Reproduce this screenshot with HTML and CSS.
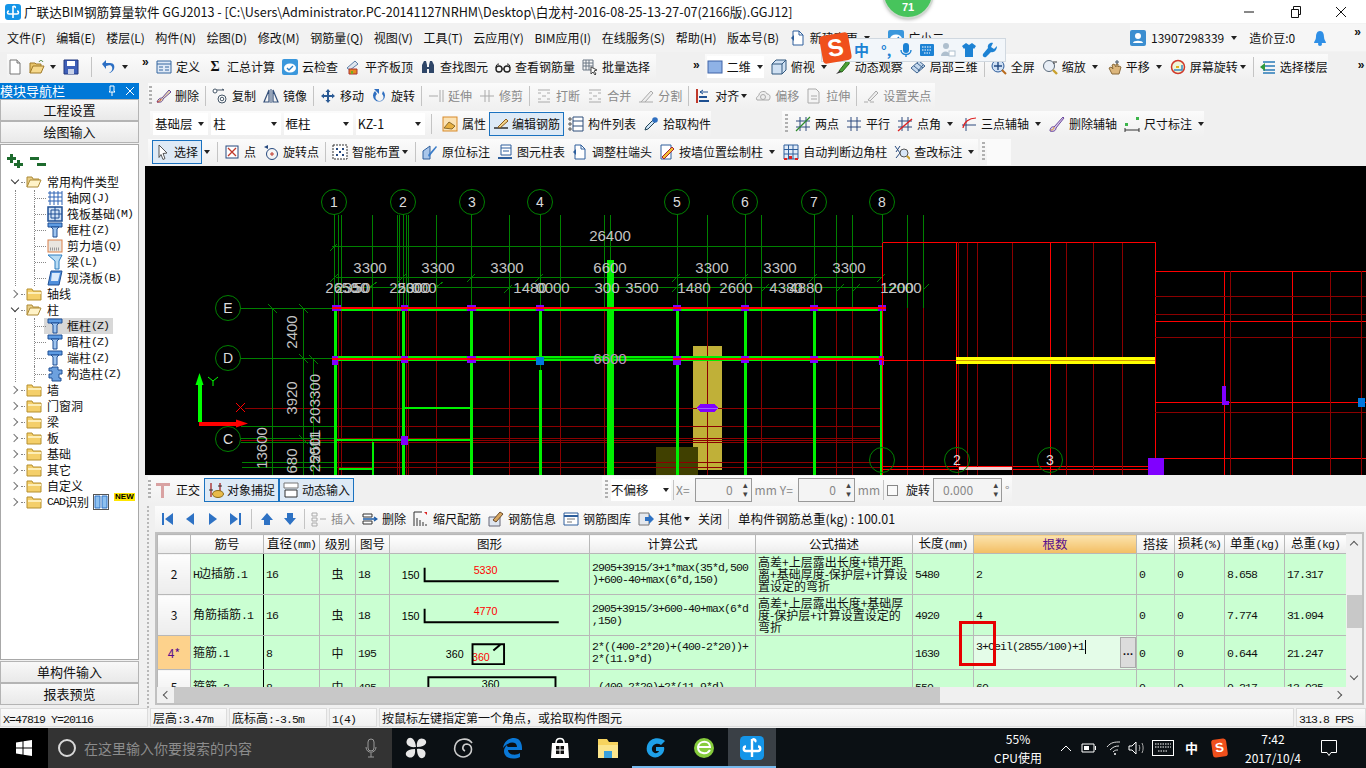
FILE: index.html
```html
<!DOCTYPE html>
<html lang="zh-CN">
<head>
<meta charset="utf-8">
<title>广联达BIM钢筋算量软件 GGJ2013</title>
<link rel="stylesheet" href="styles.css">
</head>
<body>
<svg class="sprite" width="0" height="0">
  <defs>
    <symbol id="app" viewBox="0 0 16 16"><rect width="16" height="16" rx="3" fill="#1495e8"/><path d="M8 2v12M4 7c-2 0-2 3 0 3h8c2 0 2-3 0-3M8 3c1-1.500 3-.5 2 1" fill="none" stroke="#fff" stroke-width="1.600"/></symbol>
    <symbol id="doc" viewBox="0 0 16 16"><path d="M3 1h7l3 3v11H3z" fill="#fff" stroke="#777"/><path d="M10 1v3h3" fill="#ddd" stroke="#777"/></symbol>
    <symbol id="open" viewBox="0 0 16 16"><path d="M1 14V4h5l1 1h5v2" fill="#e8c46a" stroke="#a07a28"/><path d="M1 14l3-7h11l-3 7z" fill="#f6d98c" stroke="#a07a28"/><path d="M10 3c1-2 3-2 4 0" fill="none" stroke="#3a7a30"/></symbol>
    <symbol id="save" viewBox="0 0 16 16"><path d="M1 1h14v14H1z" fill="#3f5fb8" stroke="#23397f"/><path d="M4 2h8v5H4z" fill="#fff"/><path d="M5 10h6v5H5z" fill="#c9d2e8"/></symbol>
    <symbol id="undo" viewBox="0 0 16 16"><path d="M5 4h4c4 0 5 3 4 6-1 2-3 4-5 4 2-1 4-3 3-6-1-2-2-2-6-1v3L1 5l4-4z" fill="#2c6fc4"/></symbol>
    <symbol id="deficon" viewBox="0 0 16 16"><path d="M1 2h14v12H1z" fill="#dfe9f6" stroke="#35679f"/><path d="M1 5h14M3 8h4M3 11h4M9 8h4M9 11h4" stroke="#35679f" fill="none"/></symbol>
    <symbol id="cloud" viewBox="0 0 16 16"><rect x="0" y="0" width="16" height="16" rx="2" fill="#3a97dc"/><ellipse cx="8" cy="9" rx="6" ry="4.500" fill="#fff"/><path d="M5 9l2 2 4-4" fill="none" stroke="#2a80c8" stroke-width="1.400"/></symbol>
    <symbol id="flat" viewBox="0 0 16 16"><path d="M2 9l8-7 3 3-8 6z" fill="#dfe6ee" stroke="#5d7ea6"/><path d="M4 10h8v5H4z" fill="#e58a1f" stroke="#a33"/><path d="M6 12h2v3H6z" fill="#7a2"/></symbol>
    <symbol id="bino" viewBox="0 0 16 16"><path d="M2 14V6l2-4h2l1 4v2h2V6l1-4h2l2 4v8H9v-4H7v4z" fill="#2f4668"/></symbol>
    <symbol id="glass" viewBox="0 0 16 16"><circle cx="4" cy="10" r="3" fill="none" stroke="#222" stroke-width="1.400"/><circle cx="12" cy="10" r="3" fill="none" stroke="#222" stroke-width="1.400"/><path d="M1 9c0-3 1-4 3-4M7 10h2M15 9c0-3-1-4-3-4" fill="none" stroke="#222"/></symbol>
    <symbol id="batch" viewBox="0 0 16 16"><path d="M1 1h10v10H1zM1 4h10M1 7h10M4 1v10M7 1v10" fill="none" stroke="#6a7684"/><path d="M9 8l6 3-3 1 2 3-1 1-2-3-2 2z" fill="#fff" stroke="#444"/></symbol>
    <symbol id="sq" viewBox="0 0 16 16"><rect x="1" y="2" width="14" height="12" fill="#8fb2e6" stroke="#3f63a6"/></symbol>
    <symbol id="cube" viewBox="0 0 16 16"><path d="M1 5l4-4h10v10l-4 4H1z" fill="#cfe0f2" stroke="#33597f"/><path d="M1 5h10v10M11 5l4-4" fill="none" stroke="#33597f"/></symbol>
    <symbol id="orbit" viewBox="0 0 16 16"><path d="M4 12L11 3c2-2 4 0 3 2L7 13z" fill="#4aa036" stroke="#2a6a1a"/><path d="M1 15l3-3 3 1z" fill="#333"/></symbol>
    <symbol id="part3" viewBox="0 0 16 16"><path d="M1 9l8-7 6 5-8 7z" fill="#c6d9ee" stroke="#3c628e"/><path d="M4 7l6 5M7 4l6 5M8 12l5-6" stroke="#3c628e" fill="none"/></symbol>
    <symbol id="full" viewBox="0 0 16 16"><circle cx="7" cy="7" r="6" fill="#cfe0f4" stroke="#2f5e9c"/><path d="M7 3v8M3 7h8" stroke="#234a82" stroke-width="1.400"/><path d="M11 11l4 4" stroke="#b86a1c" stroke-width="2"/></symbol>
    <symbol id="zoomi" viewBox="0 0 16 16"><circle cx="7" cy="7" r="5.500" fill="#e8eef6" stroke="#5a6a7a"/><path d="M11 11l4 4" stroke="#c9a02c" stroke-width="2.400"/><path d="M12 2v3M14 2v2" stroke="#333"/></symbol>
    <symbol id="hand" viewBox="0 0 16 16"><path d="M3 9l3 6h7l2-7-2-1-1 1V5h-2V8L8 5 6 6l1 4-2-2z" fill="#dcb67c" stroke="#8a6a3a"/><path d="M11 1v4M9 3h4" stroke="#456" /></symbol>
    <symbol id="rota" viewBox="0 0 16 16"><circle cx="8" cy="8" r="6.500" fill="#eef6d8" stroke="#d0392b" stroke-width="1.500"/><path d="M4 11h8V6" fill="none" stroke="#3b8cc4" stroke-width="1.500"/><path d="M6 8h3" stroke="#e2b020" stroke-width="2"/></symbol>
    <symbol id="floor" viewBox="0 0 16 16"><path d="M3 3h12M3 7h12M3 11h12M3 14h12" stroke="#2a7bb8" stroke-width="1.600"/><path d="M0 8l5-4v8z" fill="#2f9a3a"/></symbol>
    <symbol id="del" viewBox="0 0 16 16"><path d="M2 14c1-3 3-4 5-4L14 2l2 2-8 7c0 2-2 4-6 3z" fill="#e8d9ae" stroke="#6a4a9a"/><path d="M2 14c2 0 3-1 4-3" stroke="#c0392b" fill="none"/></symbol>
    <symbol id="copy" viewBox="0 0 16 16"><circle cx="3" cy="3" r="2" fill="#fff" stroke="#456"/><circle cx="10" cy="11" r="4" fill="#fff" stroke="#456"/><circle cx="10" cy="11" r="1.800" fill="none" stroke="#456"/><path d="M5 2h7l-2 -1" stroke="#456" fill="none"/></symbol>
    <symbol id="mirror" viewBox="0 0 16 16"><path d="M6 2L1 14h5zM10 2l5 12h-5z" fill="none" stroke="#34507a" stroke-width="1.200"/><path d="M8 1v14" stroke="#34507a"/></symbol>
    <symbol id="move" viewBox="0 0 16 16"><path d="M8 1l2.500 3H9v3h3V5.500L15 8l-3 2.500V9H9v3h1.500L8 15l-2.500-3H7V9H4v1.500L1 8l3-2.500V7h3V4H5.500z" fill="#2a5a94"/></symbol>
    <symbol id="rotate" viewBox="0 0 16 16"><path d="M4 3a6 6 0 1 0 8 0l-1 3a4 4 0 1 1-5 0z" fill="#2f6fc0"/><path d="M3 1h5v5z" fill="#2f6fc0"/></symbol>
    <symbol id="ext" viewBox="0 0 16 16"><path d="M1 8h9M12 2v12M15 2v12" stroke="#aaa" fill="none"/></symbol>
    <symbol id="trim" viewBox="0 0 16 16"><path d="M1 8h14M6 2v12M10 2v12" stroke="#aaa" fill="none"/></symbol>
    <symbol id="brk" viewBox="0 0 16 16"><path d="M2 2h12M2 5h3M11 5h3M2 14h12M2 11h3M11 11h3M6 8h4" stroke="#aaa" fill="none"/></symbol>
    <symbol id="split" viewBox="0 0 16 16"><path d="M1 14h14M3 14L13 3l2 2-8 9" stroke="#aaa" fill="#eee"/></symbol>
    <symbol id="align" viewBox="0 0 16 16"><path d="M2 1v14" stroke="#c0392b" stroke-width="2"/><path d="M4 13h10M4 9h8" stroke="#1d4f91" stroke-width="2"/><path d="M5 4h8M5 4l3-2M5 4l3 2" stroke="#1d4f91" fill="none"/></symbol>
    <symbol id="off" viewBox="0 0 16 16"><path d="M2 12c-2-3 2-4 2-5 0-4 7-5 8-1 3 0 4 3 2 6z" fill="#eee" stroke="#aaa"/><circle cx="8" cy="9" r="2.500" fill="none" stroke="#aaa"/></symbol>
    <symbol id="stretch" viewBox="0 0 16 16"><path d="M2 1h8l3 3v11H2z" fill="#f4f4f4" stroke="#aaa"/><path d="M5 8h6M5 11h6" stroke="#aaa"/></symbol>
    <symbol id="grip" viewBox="0 0 16 16"><path d="M1 14h4M7 14h4M5 12l8-9 2 2-8 8z" stroke="#aaa" fill="#eee"/></symbol>
    <symbol id="attr" viewBox="0 0 16 16"><rect x="1" y="1" width="14" height="14" fill="#fbe2b4" stroke="#d78a2a"/><path d="M2 12l5-6 6 4-3 3z" fill="#e8b040" stroke="#8a6a2a"/></symbol>
    <symbol id="edit" viewBox="0 0 16 16"><path d="M1 12h14" stroke="#222" stroke-width="1.400"/><path d="M5 11l8-8 2 2-8 7z" fill="#f3d489" stroke="#8a5a1a"/></symbol>
    <symbol id="list" viewBox="0 0 16 16"><path d="M1 2h2v2H1zM1 7h2v2H1zM1 12h2v2H1z" fill="none" stroke="#555"/><path d="M5 1h10v14H5zM5 5h10M5 10h10" fill="#fff" stroke="#2e4f7a"/></symbol>
    <symbol id="pick" viewBox="0 0 16 16"><path d="M2 14l1-3 7-7 2 2-7 7z" fill="#cfe4f8" stroke="#245"/><circle cx="12" cy="4" r="2.800" fill="#2f6fc0"/></symbol>
    <symbol id="twop" viewBox="0 0 16 16"><path d="M5 1v14M11 1v14M1 5h14M1 11h14" stroke="#2e4a7e" fill="none"/><path d="M1 15L15 1" stroke="#2c8a2c" stroke-width="1.200"/></symbol>
    <symbol id="para" viewBox="0 0 16 16"><path d="M5 1v14M11 1v14M1 5h14M1 11h14" stroke="#2e4a7e" fill="none"/></symbol>
    <symbol id="angle" viewBox="0 0 16 16"><path d="M5 1v14M11 1v14M1 5h14M1 11h14" stroke="#2e4a7e" fill="none"/><path d="M1 15L15 3" stroke="#d22" stroke-width="1.400"/></symbol>
    <symbol id="arc" viewBox="0 0 16 16"><path d="M5 2v13M1 9h14" stroke="#2e4a7e" fill="none"/><path d="M2 12C3 6 8 2 15 2" stroke="#d22" fill="none" stroke-width="1.200"/></symbol>
    <symbol id="brush" viewBox="0 0 16 16"><path d="M1 15c0-3 2-5 4-4L14 1l1 1-8 10c0 3-3 4-6 3z" fill="#d9c7ea" stroke="#6b4a9c"/><path d="M2 14c2 0 3-1 3-3" stroke="#e0a020" fill="none"/></symbol>
    <symbol id="dim" viewBox="0 0 16 16"><path d="M1 14h14M1 12v4M15 12v4" stroke="#333" fill="none"/><path d="M1 7h3v3H1zM12 1h3v3h-3z" fill="#3bb54a"/></symbol>
    <symbol id="arrow" viewBox="0 0 16 16"><path d="M4 1l8 8-4 .5 2 5-2 1-2-5-2 3z" fill="#fff" stroke="#555"/></symbol>
    <symbol id="point" viewBox="0 0 16 16"><rect x="2" y="2" width="12" height="12" fill="#fff" stroke="#26497f"/><path d="M4 4l8 8M12 4l-8 8" stroke="#c0392b" stroke-width="1.300"/></symbol>
    <symbol id="rotp" viewBox="0 0 16 16"><circle cx="9" cy="10" r="5.500" fill="none" stroke="#26497f"/><path d="M7 10h4M9 8v4" stroke="#c0392b"/><path d="M1 3l4-2v4z" fill="#26497f"/></symbol>
    <symbol id="smart" viewBox="0 0 16 16"><rect x="1" y="1" width="14" height="14" fill="#fff" stroke="#333" stroke-dasharray="2 1"/><path d="M4 4h2v2H4zM10 4h2v2h-2zM4 10h2v2H4zM10 10h2v2h-2zM7 7h2v2H7z" fill="#26497f"/></symbol>
    <symbol id="orig" viewBox="0 0 16 16"><path d="M1 15V7l7-5v13z" fill="#a9c6ea" stroke="#2e5f9c"/><path d="M6 11l8-9 1 1-8 10z" fill="#3a7cc8"/></symbol>
    <symbol id="coltab" viewBox="0 0 16 16"><path d="M4 1h10v10H4z" fill="#fff" stroke="#2e5f9c"/><path d="M4 4h10M6 7h6" stroke="#2e5f9c"/><path d="M1 13h14v2H1z" fill="#2e5f9c"/></symbol>
    <symbol id="coladj" viewBox="0 0 16 16"><path d="M3 1h6l4 4v10H3z" fill="#fff" stroke="#2e5f9c"/><path d="M9 1v4h4" fill="none" stroke="#2e5f9c"/><path d="M1 8l3-3v6z" fill="#2e5f9c"/></symbol>
    <symbol id="wall" viewBox="0 0 16 16"><path d="M2 1h10v14H2z" fill="#fff" stroke="#2e5f9c"/><path d="M3 13L13 3l2 2L5 15z" fill="#f1c232" stroke="#a23"/></symbol>
    <symbol id="auto" viewBox="0 0 16 16"><path d="M1 1h14v14H1zM1 5.500h14M1 10h14M5.500 1v14M10 1v14" fill="#e2ecf8" stroke="#2e5f9c"/><path d="M1 14h3v2H1zM12 14h3v2h-3zM6 12h3v3H6z" fill="#d22"/></symbol>
    <symbol id="chk" viewBox="0 0 16 16"><path d="M1 2l5 7-4 5M6 2L2 8" stroke="#26497f" fill="none"/><circle cx="10" cy="9" r="4" fill="#d8e6f6" stroke="#555"/><path d="M13 12l3 3" stroke="#c9a02c" stroke-width="2"/></symbol>
    <symbol id="ortho" viewBox="0 0 16 16"><path d="M1 1h14v3H9v12H6V4H1z" fill="#d9a2a2"/></symbol>
    <symbol id="snap" viewBox="0 0 16 16"><path d="M3 1v14M12 1v8" stroke="#a33" stroke-width="1.400"/><path d="M1 8h4M10 4h4" stroke="#333"/><ellipse cx="10" cy="12" rx="5.500" ry="3.500" fill="#e8bb4a" stroke="#8a6a1a"/></symbol>
    <symbol id="dyn" viewBox="0 0 16 16"><path d="M1 1h14v5H1z" fill="#fff" stroke="#777"/><path d="M2 8h12v7H2z" fill="#fff" stroke="#333"/></symbol>
    <symbol id="first" viewBox="0 0 16 16"><path d="M3 2h2v12H3zM14 2v12L6 8z" fill="#2e72c4"/></symbol>
    <symbol id="prev" viewBox="0 0 16 16"><path d="M12 2v12L4 8z" fill="#2e72c4"/></symbol>
    <symbol id="next" viewBox="0 0 16 16"><path d="M4 2v12l8-6z" fill="#2e72c4"/></symbol>
    <symbol id="last" viewBox="0 0 16 16"><path d="M11 2h2v12h-2zM2 2v12l8-6z" fill="#2e72c4"/></symbol>
    <symbol id="up" viewBox="0 0 16 16"><path d="M8 2l6 7h-3v5H5V9H2z" fill="#2e72c4"/></symbol>
    <symbol id="down" viewBox="0 0 16 16"><path d="M8 14l6-7h-3V2H5v5H2z" fill="#2e72c4"/></symbol>
    <symbol id="ins" viewBox="0 0 16 16"><path d="M1 2h5v3H1zM1 7h5v3H1zM1 12h5v3H1zM9 8h6" fill="none" stroke="#aaa"/></symbol>
    <symbol id="rdel" viewBox="0 0 16 16"><path d="M1 3h9v3H1zM1 10h9v3H1z" fill="#fff" stroke="#333"/><path d="M1 8h13M12 6l3 2-3 2" fill="none" stroke="#1d5ca8" stroke-width="1.300"/></symbol>
    <symbol id="scale" viewBox="0 0 16 16"><path d="M1 1h8M1 1v14M4 7v8M7 9v6M10 11v4M13 13v2" stroke="#333"/><path d="M11 1h3v3z" fill="#d22"/></symbol>
    <symbol id="info" viewBox="0 0 16 16"><path d="M1 6h11v9H1z" fill="#dfe6f0" stroke="#667"/><path d="M5 9l7-8 3 2-7 8z" fill="#d9a860" stroke="#6a4a2a"/></symbol>
    <symbol id="lib" viewBox="0 0 16 16"><path d="M1 2h14v12H1z" fill="#fff" stroke="#2e5f9c"/><path d="M1 5h14" stroke="#2e5f9c" stroke-width="2"/><path d="M4 8h8M4 11h5" stroke="#777"/></symbol>
    <symbol id="other" viewBox="0 0 16 16"><path d="M1 2h10v12H1z" fill="#e4e8ee" stroke="#777"/><path d="M7 6h4V3l5 5-5 5v-3H7z" fill="#2e72c4"/></symbol>
    <symbol id="folder" viewBox="0 0 16 16"><path d="M1 3h5l1 2h8v9H1z" fill="#f4cf6a" stroke="#b58f2f"/><path d="M2 6h13v2H2z" fill="#fdeeb8"/></symbol>
    <symbol id="folderopen" viewBox="0 0 16 16"><path d="M1 13V3h5l1 2h6v2" fill="#e9cf88" stroke="#ad8a37"/><path d="M1 13l3-7h11l-3 7z" fill="#fff3c8" stroke="#ad8a37"/></symbol>
    <symbol id="gridi" viewBox="0 0 16 16"><path d="M3 1v14M7 1v14M11 1v14M15 1v14M1 3h14M1 7h14M1 11h14" stroke="#2d62b4"/></symbol>
    <symbol id="raft" viewBox="0 0 16 16"><path d="M1 1h14v14H1z" fill="#cfe0f4" stroke="#1f4f94" stroke-width="1.500"/><path d="M4 4h8v8H4zM1 8h14M8 1v14" fill="none" stroke="#1f4f94"/></symbol>
    <symbol id="col" viewBox="0 0 16 16"><path d="M1 1h14v4H1z" fill="#5d9be2" stroke="#1f4f94"/><path d="M4 5h8l-2 2v8H6V7z" fill="#9ec4ef" stroke="#1f4f94"/></symbol>
    <symbol id="shear" viewBox="0 0 16 16"><rect x="1" y="2" width="14" height="12" fill="#e9e6e0" stroke="#d9804a"/><path d="M3 11h9" stroke="#999" stroke-width="3" stroke-dasharray="1 1"/></symbol>
    <symbol id="beam" viewBox="0 0 16 16"><path d="M1 1h14L12 7v8H8V7z" fill="#b8dcf4" stroke="#2e7ec0"/></symbol>
    <symbol id="slab" viewBox="0 0 16 16"><path d="M4 1h11l-3 14H1z" fill="#4f8fdc" stroke="#1f4f94"/><path d="M5 3h8l-2 8H4z" fill="#dbeafb"/></symbol>
    <symbol id="gz" viewBox="0 0 16 16"><path d="M5 1h6v3h4v4h-3v4h2v3H5v-3H2V8h3V5H2V2h3z" fill="#6da1de" stroke="#1f4f94"/></symbol>
    <symbol id="cad" viewBox="0 0 16 16"><rect x=".5" y=".5" width="15" height="15" fill="#fff" stroke="#555"/><path d="M2 2h5v12H2zM9 2h5v12H9z" fill="#8dc0f0" stroke="#2e72c4"/></symbol>
  </defs>
</svg>

<div class="app">
  <header class="title">
    <svg class="i"><use href="#app"/></svg>
    <span class="title-text">广联达BIM钢筋算量软件 GGJ2013 - [C:\Users\Administrator.PC-20141127NRHM\Desktop\白龙村-2016-08-25-13-27-07(2166版).GGJ12]</span>
    <div class="winbtns">
      <svg class="wb" viewBox="0 0 12 12"><path d="M1 6h10" stroke="#111"/></svg>
      <svg class="wb" viewBox="0 0 12 12"><path d="M2.500 3.500h7v8h-7zM4.500 3V.5h7v8H10" fill="none" stroke="#111"/></svg>
      <svg class="wb" viewBox="0 0 12 12"><path d="M1 1l10 10M11 1L1 11" stroke="#111"/></svg>
    </div>
  </header>

  <nav class="menu">
    <span>文件(F)</span><span>编辑(E)</span><span>楼层(L)</span><span>构件(N)</span><span>绘图(D)</span><span>修改(M)</span><span>钢筋量(Q)</span><span>视图(V)</span><span>工具(T)</span><span>云应用(Y)</span><span>BIM应用(I)</span><span>在线服务(S)</span><span>帮助(H)</span><span>版本号(B)</span>
    <span class="it"><svg class="i"><use href="#coladj"/></svg>新建变更<i class="dd"></i></span>
    <span class="it helper"><svg class="i"><use href="#cloud"/></svg>广小二</span>
    <div class="account">
      <svg class="i avatar" viewBox="0 0 16 16"><rect width="16" height="16" rx="2" fill="#3c8ed0"/><circle cx="8" cy="6" r="3" fill="#fff"/><path d="M3 13c0-3 10-3 10 0z" fill="#fff"/></svg>
      <span>13907298339</span><i class="dd"></i>
      <span class="beans">造价豆:0</span>
      <svg class="i bell" viewBox="0 0 16 16"><path d="M8 1c3 0 4 3 4 6 0 3 2 4 2 6H2c0-2 2-3 2-6 0-3 1-6 4-6z" fill="#2f8fe6"/><circle cx="8" cy="14" r="2" fill="#2f8fe6"/></svg>
      <b class="more">»</b>
    </div>
  </nav>

  <div class="row row1">
    <div class="tg tg-file">
      <svg class="i"><use href="#doc"/></svg>
      <span class="it"><svg class="i"><use href="#open"/></svg><i class="dd"></i></span>
      <svg class="i"><use href="#save"/></svg>
      <i class="sep"></i>
      <span class="it"><svg class="i"><use href="#undo"/></svg><i class="dd"></i></span>
      <b class="more">»</b>
    </div>
    <div class="tg tg-main">
      <span class="it"><svg class="i"><use href="#deficon"/></svg>定义</span>
      <span class="it"><b class="i sigma">Σ</b>汇总计算</span>
      <span class="it"><svg class="i"><use href="#cloud"/></svg>云检查</span>
      <span class="it"><svg class="i"><use href="#flat"/></svg>平齐板顶</span>
      <span class="it"><svg class="i"><use href="#bino"/></svg>查找图元</span>
      <span class="it"><svg class="i"><use href="#glass"/></svg>查看钢筋量</span>
      <span class="it"><svg class="i"><use href="#batch"/></svg>批量选择</span>
    </div>
    <b class="more more-mid">»</b>
    <div class="tg tg-view">
      <span class="it view2d"><svg class="i"><use href="#sq"/></svg>二维<i class="dd"></i></span>
      <span class="it"><svg class="i"><use href="#cube"/></svg>俯视<i class="dd"></i></span>
      <span class="it"><svg class="i"><use href="#orbit"/></svg>动态观察</span>
      <span class="it"><svg class="i"><use href="#part3"/></svg>局部三维</span>
      <i class="sep"></i>
      <span class="it"><svg class="i"><use href="#full"/></svg>全屏</span>
      <span class="it"><svg class="i"><use href="#zoomi"/></svg>缩放<i class="dd"></i></span>
      <span class="it"><svg class="i"><use href="#hand"/></svg>平移<i class="dd"></i></span>
      <span class="it"><svg class="i"><use href="#rota"/></svg>屏幕旋转<i class="dd dd-tight"></i></span>
      <i class="sep"></i>
      <span class="it"><svg class="i"><use href="#floor"/></svg>选择楼层</span>
    </div>
    <b class="more more-end">»</b>
  </div>

  <div class="main">
    <aside class="side">
      <div class="nav">
        <div class="nav-head"><span>模块导航栏</span><span class="nav-ctl"><svg class="pin" viewBox="0 0 10 12"><path d="M3 1h4v5l1 1H2l1-1zM5 7v4" fill="none" stroke="#fff"/></svg><svg class="pin" viewBox="0 0 10 12"><path d="M1 2l8 8M9 2l-8 8" stroke="#fff"/></svg></span></div>
        <div class="nav-btn">工程设置</div>
        <div class="nav-btn">绘图输入</div>
        <div class="tree">
          <div class="tree-tools">
            <svg class="tt" viewBox="0 0 16 14"><path d="M0 4.500h9M4.500 0v9M7 10.500h9M11.500 6v8" stroke="#1e6b2e" stroke-width="3"/></svg>
            <svg class="tt" viewBox="0 0 16 14"><path d="M0 4.500h9M7 10.500h9" stroke="#1e6b2e" stroke-width="3"/></svg>
          </div>
          <div class="node"><i class="chev open"></i><i class="dash"></i><svg class="i"><use href="#folderopen"/></svg>常用构件类型</div>
          <div class="kids">
            <div class="leaf"><svg class="i"><use href="#gridi"/></svg>轴网<span class="m">(J)</span></div>
            <div class="leaf"><svg class="i"><use href="#raft"/></svg>筏板基础<span class="m">(M)</span></div>
            <div class="leaf"><svg class="i"><use href="#col"/></svg>框柱<span class="m">(Z)</span></div>
            <div class="leaf"><svg class="i"><use href="#shear"/></svg>剪力墙<span class="m">(Q)</span></div>
            <div class="leaf"><svg class="i"><use href="#beam"/></svg>梁<span class="m">(L)</span></div>
            <div class="leaf"><svg class="i"><use href="#slab"/></svg>现浇板<span class="m">(B)</span></div>
          </div>
          <div class="node"><i class="chev"></i><i class="dash"></i><svg class="i"><use href="#folder"/></svg>轴线</div>
          <div class="node"><i class="chev open"></i><i class="dash"></i><svg class="i"><use href="#folderopen"/></svg>柱</div>
          <div class="kids">
            <div class="leaf leaf-sel"><svg class="i"><use href="#col"/></svg>框柱<span class="m">(Z)</span></div>
            <div class="leaf"><svg class="i"><use href="#col"/></svg>暗柱<span class="m">(Z)</span></div>
            <div class="leaf"><svg class="i"><use href="#col"/></svg>端柱<span class="m">(Z)</span></div>
            <div class="leaf"><svg class="i"><use href="#gz"/></svg>构造柱<span class="m">(Z)</span></div>
          </div>
          <div class="node"><i class="chev"></i><i class="dash"></i><svg class="i"><use href="#folder"/></svg>墙</div>
          <div class="node"><i class="chev"></i><i class="dash"></i><svg class="i"><use href="#folder"/></svg>门窗洞</div>
          <div class="node"><i class="chev"></i><i class="dash"></i><svg class="i"><use href="#folder"/></svg>梁</div>
          <div class="node"><i class="chev"></i><i class="dash"></i><svg class="i"><use href="#folder"/></svg>板</div>
          <div class="node"><i class="chev"></i><i class="dash"></i><svg class="i"><use href="#folder"/></svg>基础</div>
          <div class="node"><i class="chev"></i><i class="dash"></i><svg class="i"><use href="#folder"/></svg>其它</div>
          <div class="node"><i class="chev"></i><i class="dash"></i><svg class="i"><use href="#folder"/></svg>自定义</div>
          <div class="node"><i class="chev"></i><i class="dash"></i><svg class="i"><use href="#folder"/></svg><span class="m">CAD</span>识别<svg class="i cad"><use href="#cad"/></svg><span class="new">NEW</span></div>
        </div>
        <div class="nav-btn">单构件输入</div>
        <div class="nav-btn">报表预览</div>
      </div>
    </aside>

    <section class="work">
      <div class="row row2">
        <div class="tg tg-edit">
          <i class="grip"></i>
          <span class="it"><svg class="i"><use href="#del"/></svg>删除</span>
          <i class="sep"></i>
          <span class="it"><svg class="i"><use href="#copy"/></svg>复制</span>
          <span class="it"><svg class="i"><use href="#mirror"/></svg>镜像</span>
          <i class="sep"></i>
          <span class="it"><svg class="i"><use href="#move"/></svg>移动</span>
          <span class="it"><svg class="i"><use href="#rotate"/></svg>旋转</span>
          <i class="sep"></i>
          <span class="it off"><svg class="i"><use href="#ext"/></svg>延伸</span>
          <span class="it off"><svg class="i"><use href="#trim"/></svg>修剪</span>
          <i class="sep"></i>
          <span class="it off"><svg class="i"><use href="#brk"/></svg>打断</span>
          <span class="it off"><svg class="i"><use href="#brk"/></svg>合并</span>
          <span class="it off"><svg class="i"><use href="#split"/></svg>分割</span>
          <i class="sep"></i>
          <span class="it"><svg class="i"><use href="#align"/></svg>对齐<i class="dd dd-tight"></i></span>
          <span class="it off"><svg class="i"><use href="#off"/></svg>偏移</span>
          <span class="it off"><svg class="i"><use href="#stretch"/></svg>拉伸</span>
          <i class="sep"></i>
          <span class="it off"><svg class="i"><use href="#grip"/></svg>设置夹点</span>
        </div>
      </div>

      <div class="row row3">
        <div class="tg tg-combo">
          <span class="combo c1">基础层<i class="dd"></i></span>
          <span class="combo c2">柱<i class="dd"></i></span>
          <span class="combo c2">框柱<i class="dd"></i></span>
          <span class="combo c2">KZ-1<i class="dd"></i></span>
          <i class="sep"></i>
          <span class="it"><svg class="i"><use href="#attr"/></svg>属性</span>
          <span class="it active"><svg class="i"><use href="#edit"/></svg>编辑钢筋</span>
          <span class="it ml2"><svg class="i"><use href="#list"/></svg>构件列表</span>
          <span class="it ml6"><svg class="i"><use href="#pick"/></svg>拾取构件</span>
        </div>
        <div class="tg tg-axis">
          <i class="grip"></i>
          <span class="it"><svg class="i"><use href="#twop"/></svg>两点</span>
          <span class="it"><svg class="i"><use href="#para"/></svg>平行</span>
          <span class="it"><svg class="i"><use href="#angle"/></svg>点角<i class="dd"></i></span>
          <span class="it"><svg class="i"><use href="#arc"/></svg>三点辅轴<i class="dd"></i></span>
          <span class="it"><svg class="i"><use href="#brush"/></svg>删除辅轴</span>
          <span class="it"><svg class="i"><use href="#dim"/></svg>尺寸标注<i class="dd"></i></span>
        </div>
      </div>

      <div class="row row4">
        <div class="tg tg-draw">
          <span class="it active sel"><svg class="i"><use href="#arrow"/></svg>选择</span><i class="dd"></i>
          <i class="sep"></i>
          <span class="it"><svg class="i"><use href="#point"/></svg>点</span>
          <span class="it"><svg class="i"><use href="#rotp"/></svg>旋转点</span>
          <i class="sep"></i>
          <span class="it"><svg class="i"><use href="#smart"/></svg>智能布置<i class="dd dd-tight"></i></span>
          <i class="sep"></i>
          <span class="it"><svg class="i"><use href="#orig"/></svg>原位标注</span>
          <span class="it"><svg class="i"><use href="#coltab"/></svg>图元柱表</span>
          <span class="it"><svg class="i"><use href="#coladj"/></svg>调整柱端头</span>
          <span class="it"><svg class="i"><use href="#wall"/></svg>按墙位置绘制柱<i class="dd"></i></span>
          <span class="it"><svg class="i"><use href="#auto"/></svg>自动判断边角柱</span>
          <span class="it"><svg class="i"><use href="#chk"/></svg>查改标注<i class="dd"></i></span>
        </div>
        <div class="tg tg-empty"><i class="grip"></i><span class="blank"></span></div>
      </div>

      <svg class="cad-view" viewBox="145 166 1221 309" role="img">
        <g class="shapes">
          <rect x="693" y="346" width="29" height="124" fill="#c0b038"/>
          <rect x="656" y="447" width="42" height="28" fill="#404000"/>

          <!-- thin red / dark-red grid -->
          <path class="dr" d="M245 408.500H882M241 426.500H882M241 438.500H882M241 440.500H882M241 442.500H882M242 462.500H882M242 467.500H882"/>
          <path class="dr" d="M338.500 308V475M341.500 308V475M372.500 308V475M397.500 308V475M399.500 308V475M406.500 308V475M408.500 308V475M436.500 308V475M509.500 308V475M540.500 380V475M560.500 308V475M604.500 308V475M610.500 308V475M707.500 308V475M761.500 308V475M836.500 308V475M852.500 308V475M907.500 308V475M923.500 308V475"/>

          <!-- green axes and dimensions -->
          <path class="g" d="M334.500 214V475M338.500 215V308M341.500 215V308M403.500 214V308M397.500 215V308M399.500 215V308M406.500 215V308M408.500 215V308M471.500 214V308M540.500 214V380M677.500 214V308M745.500 214V308M814.500 214V308M882.500 214V308"/>
          <path class="g" d="M372.500 215V308M436.500 215V308M509.500 215V308M560.500 215V308M604.500 215V308M610.500 215V308M707.500 215V308M761.500 215V308M836.500 215V308M852.500 215V308M907.500 215V308M923.500 215V308"/>
          <path class="g" d="M332 246.500H882M336 277.500H882M336 287.500H910"/>
          <path class="g" d="M241 308.500H334M241 358.500H334M241 426.500H334M241 438.500H334M241 442.500H334M242 462.500H334M242 467.500H334"/>
          <path class="g" d="M272.500 308V475M303.500 308V475M313.500 358V475"/>
          <path class="g" d="M330 251l7-7M330 282l8-8M398 282l8-8M467 282l8-8M535 282l8-8M672 282l8-8M740 282l8-8M809 282l8-8M877 282l8-8M370 287l7-5M436 287l7-5M504 293l8-8M604 293l8-8M672 292l8-8M761 292l8-8M836 292l8-8M852 292l8-8M923 290l6-6M268 304l9 9M299 304l9 9M299 354l9 9M309 355l9 9M299 435l9 9"/>

          <!-- main green beams -->
          <path class="bm2" d="M333 310H882"/>
          <path class="bm5" d="M333 358.500H882"/>
          <path class="g" d="M540 358.500H677"/>
          <path class="bm3" d="M335 308V475M403 308V475M471.500 308V475M540 308V358M540 370V475M677 308V475M745 308V475M814 308V475M881.500 308V475"/>
          <path class="bm2" d="M405 407.500H471M336 440H472M339 468.500H372M373 442V475"/>
          <rect x="607" y="260" width="7" height="215" fill="#00f000"/>
          <path class="red2" d="M333 308H882M338 358.500H540M677 358.500H882"/>

          <!-- purple column markers -->
          <path class="pu" d="M332 305h9v6h-9zM401 305h7v6h-7zM467 305h9v6h-9zM536 305h8v6h-8zM673 305h8v6h-8zM741 305h8v6h-8zM810 305h8v6h-8zM878 305h8v6h-8zM332 356h6v9h-6zM401 356h7v7h-7zM467 356h9v7h-9zM673 356h8v9h-8zM741 356h8v7h-8zM810 356h8v7h-8zM879 356h5v9h-5zM401 436h7v9h-7z"/>
          <path class="red2" d="M332 308H341M401 308H408M467 308H476M536 308H544M673 308H681M741 308H749M810 308H818M878 308H886M332 358.500H338M401 358.500H408M467 358.500H476M673 358.500H681M741 358.500H749M810 358.500H818M879 358.500H884"/>
          <rect x="536" y="357" width="8" height="8" fill="#0078e0"/>
          <path class="pu" d="M700 404h15l3 4-3 4h-15l-3-4z"/>
          <path class="lilac" d="M697 408H718"/>

          <!-- right red drawing -->
          <path class="red" d="M882.500 242.500H1155.500V466M882.500 242.500V475M956.500 242.500V466M1050.500 242.500V475M882 360.500H956M1155 271.500H1366M1155 321.500H1366M1155 402.500H1366M1155 458.500H1366M1224.500 271V475M1292.500 271V475M882 466.500H1155M882 469.500H1155"/>
          <path class="dr" d="M958.500 242V475M967.500 243V475M977.500 243V475M1012.500 243V475M1066.500 243V475M1093.500 243V475M1122.500 243V475M1155 296.500H1366M1155 314.500H1366M1155 337.500H1366M1155 412.500H1366M1230.500 271V475M1330.500 271V475M1361.500 271V475"/>
          <rect x="956" y="357" width="199" height="7" fill="#ffff00"/>
          <path class="amber" d="M956 360.500H1155"/>
          <path class="pu" d="M1222 386h4v15h3v4h-7zM1148 458h16v17h-16z"/>
          <rect x="1358" y="398" width="7" height="9" fill="#0078e0"/>
          <rect x="959" y="467" width="53" height="3" fill="#f0d0d0"/>

          <!-- UCS -->
          <path class="ucs-g" d="M199.500 422V384"/>
          <path class="tip-g" d="M199.500 373l4 12h-8z"/>
          <path class="ucs-r" d="M199 423.500H238"/>
          <path class="tip-r" d="M248 423.500l-12 4v-8z"/>
          <path class="thin-g" d="M208 377l5 4 5-4M213 381v5"/>
          <path class="thin-r" d="M236 403l9 9M245 403l-9 9"/>
        </g>

        <g class="bubbles">
          <circle cx="334" cy="202" r="12.500"/><circle cx="403" cy="202" r="12.500"/><circle cx="472" cy="202" r="12.500"/><circle cx="540" cy="202" r="12.500"/><circle cx="677" cy="202" r="12.500"/><circle cx="745" cy="202" r="12.500"/><circle cx="814" cy="202" r="12.500"/><circle cx="882" cy="202" r="12.500"/>
          <circle cx="228" cy="308" r="12.500"/><circle cx="228" cy="358" r="12.500"/><circle cx="228" cy="439" r="12.500"/>
          <circle cx="882" cy="460" r="12.500"/><circle cx="957" cy="460" r="12.500"/><circle cx="1050" cy="460" r="12.500"/>
        </g>

        <g class="labels-c">
          <text x="334" y="207">1</text><text x="403" y="207">2</text><text x="472" y="207">3</text><text x="540" y="207">4</text><text x="677" y="207">5</text><text x="745" y="207">6</text><text x="814" y="207">7</text><text x="882" y="207">8</text>
          <text x="228" y="313">E</text><text x="228" y="363">D</text><text x="228" y="444">C</text>
          <text x="957" y="465">2</text><text x="1050" y="465">3</text>
        </g>

        <g class="labels-d">
          <text x="610" y="241">26400</text>
          <text x="370" y="273">3300</text><text x="438" y="273">3300</text><text x="507" y="273">3300</text><text x="610" y="273">6600</text><text x="712" y="273">3300</text><text x="780" y="273">3300</text><text x="849" y="273">3300</text>
          <text x="342" y="293">2650</text><text x="352" y="293">2350</text><text x="362" y="293">50</text>
          <text x="406" y="293">2500</text><text x="414" y="293">2300</text><text x="424" y="293">000</text>
          <text x="530" y="293">1480</text><text x="553" y="293">0000</text>
          <text x="607" y="293">300</text><text x="642" y="293">3500</text>
          <text x="694" y="293">1480</text><text x="736" y="293">2600</text><text x="786" y="293">4380</text><text x="806" y="293">4880</text>
          <text x="897" y="293">1200</text><text x="905" y="293">2000</text>
          <text class="pk" x="610" y="364">6600</text>
          <text transform="translate(297 332) rotate(-90)">2400</text>
          <text transform="translate(297 398) rotate(-90)">3920</text>
          <text transform="translate(297 461) rotate(-90)">680</text>
          <text transform="translate(267 448) rotate(-90)">13600</text>
          <text transform="translate(320 399) rotate(-90)">203300</text>
          <text transform="translate(320 452) rotate(-90)">25011</text>
          <text transform="translate(320 446) rotate(-90)">2501</text>
        </g>
      </svg>

      <div class="row snapbar">
        <div class="tg tg-snap">
          <i class="grip"></i>
          <span class="it off"><svg class="i"><use href="#ortho"/></svg><span class="dk">正交</span></span>
          <span class="it active"><svg class="i"><use href="#snap"/></svg>对象捕捉</span><span class="it active"><svg class="i"><use href="#dyn"/></svg>动态输入</span>
        </div>
        <div class="tg tg-offs">
          <i class="grip"></i>
          <span class="combo c3">不偏移<i class="dd"></i></span>
          <i class="sep"></i>
          <span class="muted">X=</span>
          <span class="spin s1">0</span>
          <span class="muted">mm</span>
          <span class="muted">Y=</span>
          <span class="spin s1">0</span>
          <span class="muted">mm</span>
          <i class="sep sep-z"></i>
          <i class="check"></i>
          <span class="rot">旋转</span>
          <span class="spin s2">0.000</span>
          <span class="muted">°</span>
        </div>
      </div>

      <div class="editor">
        <div class="grips"></div>
        <div class="edit-body">
          <div class="tg tg-rebar">
            <svg class="i"><use href="#first"/></svg>
            <svg class="i"><use href="#prev"/></svg>
            <svg class="i"><use href="#next"/></svg>
            <svg class="i"><use href="#last"/></svg>
            <i class="sep sep-z"></i>
            <svg class="i"><use href="#up"/></svg>
            <svg class="i"><use href="#down"/></svg>
            <i class="sep"></i>
            <span class="it off"><svg class="i"><use href="#ins"/></svg>插入</span>
            <span class="it"><svg class="i"><use href="#rdel"/></svg>删除</span>
            <span class="it"><svg class="i"><use href="#scale"/></svg>缩尺配筋</span>
            <span class="it"><svg class="i"><use href="#info"/></svg>钢筋信息</span>
            <span class="it"><svg class="i"><use href="#lib"/></svg>钢筋图库</span>
            <span class="it"><svg class="i"><use href="#other"/></svg>其他<i class="dd dd-tight"></i></span>
            <span class="close">关闭</span>
            <i class="sep"></i>
            <span class="total">单构件钢筋总重(kg) : 100.01</span>
          </div>

          <div class="sheet">
            <div class="sheet-clip">
              <table class="rebar">
                <colgroup><col class="w33"><col class="w73"><col class="w56"><col class="w36"><col class="w34"><col class="w200"><col class="w166"><col class="w157"><col class="w61"><col class="w163"><col class="w38"><col class="w50"><col class="w60"><col class="w62"></colgroup>
                <thead>
                  <tr><th></th><th>筋号</th><th>直径<span class="m">(mm)</span></th><th>级别</th><th>图号</th><th>图形</th><th>计算公式</th><th>公式描述</th><th>长度<span class="m">(mm)</span></th><th class="cur">根数</th><th>搭接</th><th>损耗<span class="m">(%)</span></th><th>单重<span class="m">(kg)</span></th><th>总重<span class="m">(kg)</span></th></tr>
                </thead>
                <tbody>
                  <tr class="r41">
                    <th>2</th><td class="bl"><span class="m">H</span>边插筋<span class="m">.1</span></td><td><span class="m">16</span></td><td class="ctr">虫</td><td><span class="m">18</span></td>
                    <td class="shape"><svg class="fig" viewBox="0 0 200 41"><text class="k" x="10" y="26">150</text><text class="rd" x="96" y="21" text-anchor="middle">5330</text><path d="M33.500 14V28H171" fill="none" stroke="#000" stroke-width="2"/></svg></td>
                    <td class="f">2905+3915/3+1*max(35*d,500<br>)+600-40+max(6*d,150)</td>
                    <td class="d">高差+上层露出长度+错开距<br>离+基础厚度-保护层+计算设<br>置设定的弯折</td>
                    <td><span class="m">5480</span></td><td><span class="m">2</span></td><td><span class="m">0</span></td><td><span class="m">0</span></td><td><span class="m">8.658</span></td><td><span class="m">17.317</span></td>
                  </tr>
                  <tr class="r41">
                    <th>3</th><td class="bl">角筋插筋<span class="m">.1</span></td><td><span class="m">16</span></td><td class="ctr">虫</td><td><span class="m">18</span></td>
                    <td class="shape"><svg class="fig" viewBox="0 0 200 41"><text class="k" x="10" y="26">150</text><text class="rd" x="96" y="21" text-anchor="middle">4770</text><path d="M33.500 14V28H171" fill="none" stroke="#000" stroke-width="2"/></svg></td>
                    <td class="f">2905+3915/3+600-40+max(6*d<br>,150)</td>
                    <td class="d">高差+上层露出长度+基础厚<br>度-保护层+计算设置设定的<br>弯折</td>
                    <td><span class="m">4920</span></td><td><span class="m">4</span></td><td><span class="m">0</span></td><td><span class="m">0</span></td><td><span class="m">7.774</span></td><td><span class="m">31.094</span></td>
                  </tr>
                  <tr class="r34">
                    <th class="mark">4*</th><td class="bl">箍筋<span class="m">.1</span></td><td><span class="m">8</span></td><td class="ctr">中</td><td><span class="m">195</span></td>
                    <td class="shape"><svg class="fig" viewBox="0 0 200 34"><text class="k" x="55" y="23">360</text><text class="rd" x="82" y="26">360</text><path d="M82.500 8.500H115V29H82.500zM104 15l7-6" fill="none" stroke="#000" stroke-width="2"/></svg></td>
                    <td class="f">2*((400-2*20)+(400-2*20))+<br>2*(11.9*d)</td>
                    <td class="d"></td>
                    <td><span class="m">1630</span></td>
                    <td class="cell-edit"><div class="edit-in"><span class="m caret">3+Ceil(2855/100)+1</span><b class="dots">…</b></div></td>
                    <td><span class="m">0</span></td><td><span class="m">0</span></td><td><span class="m">0.644</span></td><td><span class="m">21.247</span></td>
                  </tr>
                  <tr class="r34">
                    <th>5</th><td class="bl">箍筋<span class="m">.2</span></td><td><span class="m">8</span></td><td class="ctr">中</td><td><span class="m">485</span></td>
                    <td class="shape"><svg class="fig" viewBox="0 0 200 34"><text class="k" x="92" y="19">360</text><path d="M37 18V7.500H168V18l-3 3M37 18l3 3" fill="none" stroke="#000" stroke-width="2"/></svg></td>
                    <td class="f">&nbsp;(400-2*20)+2*(11.9*d)</td>
                    <td class="d"></td>
                    <td><span class="m">550</span></td><td><span class="m">60</span></td><td><span class="m">0</span></td><td><span class="m">0</span></td><td><span class="m">0.217</span></td><td><span class="m">13.035</span></td>
                  </tr>
                </tbody>
              </table>
            </div>
            <div class="vbar"><i class="thumb-v"></i><b class="ar ar-up"></b><b class="ar ar-dn"></b></div>
            <div class="hbar"><b class="ar ar-lt"></b><i class="thumb-h"></i><b class="ar ar-rt"></b></div>
            <div class="redbox"></div>
          </div>
        </div>
      </div>
    </section>
  </div>

  <footer class="status">
    <span class="st s-a"><span class="m">X=47819 Y=20116</span></span>
    <span class="st s-b">层高<span class="m">:3.47m</span></span>
    <span class="st s-c">底标高<span class="m">:-3.5m</span></span>
    <span class="st s-d"><span class="m">1(4)</span></span>
    <span class="st s-e">按鼠标左键指定第一个角点，或拾取构件图元</span>
    <span class="st s-f"><span class="m">313.8 FPS</span></span>
  </footer>

  <div class="task">
    <div class="start"><svg class="winlogo" viewBox="0 0 16 16"><path d="M0 2.500L6.500 1.500V7.500H0zM7.500 1.300L16 0V7.500H7.500zM0 8.500H6.500V14.500L0 13.500zM7.500 8.500H16V16L7.500 14.700z" fill="#fff"/></svg></div>
    <div class="search">
      <i class="cortana"></i><span>在这里输入你要搜索的内容</span>
      <svg class="mic" viewBox="0 0 12 20"><rect x="3" y="1" width="6" height="12" rx="3" fill="none" stroke="#999"/><path d="M1 9c0 7 10 7 10 0M6 15v4M3 19h6" fill="none" stroke="#999"/></svg>
    </div>
    <div class="apps">
      <span class="tapp"><svg class="ti" viewBox="0 0 24 24"><path d="M12 11C5 12 1 8 3 4s8-3 9 7zM13 11c-1-7 3-10 7-8s3 8-7 8zM13 13c7-1 10 3 8 7s-8 3-8-7zM11 13c1 7-3 10-7 8s-3-8 7-8z" fill="#e8e8e8"/></svg></span>
      <span class="tapp"><svg class="ti" viewBox="0 0 24 24"><path d="M20 7C16 1 5 2 3 10c-2 8 6 13 12 10s6-11 0-12c-4 0-6 5-2 7" fill="none" stroke="#ccc" stroke-width="1.600"/></svg></span>
      <span class="tapp"><svg class="ti" viewBox="0 0 24 24"><path d="M3 12C4 5 9 2 14 2c5 0 8 4 8 10v2H8c0 5 8 6 12 3v4c-6 3-16 2-16-6 0-2 1-4 3-6 0 2 1 2 2 2h8c0-6-9-6-14 1z" fill="#0a78d7"/></svg></span>
      <span class="tapp"><svg class="ti" viewBox="0 0 24 24"><path d="M4 7h16l1 15H3z" fill="#fff"/><path d="M8 7c0-6 8-6 8 0" fill="none" stroke="#fff" stroke-width="1.500"/><path d="M8 10h3.500v3.500H8zM12.500 10H16v3.500h-3.500zM8 14.500h3.500V18H8zM12.500 14.500H16V18h-3.500z" fill="#111"/></svg></span>
      <span class="tapp"><svg class="ti" viewBox="0 0 24 24"><path d="M2 3h9l2 3h9v16H2z" fill="#f6d35e"/><path d="M2 9h20v13H2z" fill="#fbe58c"/><path d="M8 15h8v7H8z" fill="#3aa0dc"/></svg></span>
      <span class="tapp under"><svg class="ti" viewBox="0 0 24 24"><path d="M21 5C15 0 5 2 3 10c-2 8 5 13 11 11 5-2 7-7 6-10h-8v4h3c-1 3-6 3-7-1-1-5 5-8 9-5z" fill="#1ea0e8"/></svg></span>
      <span class="tapp under"><svg class="ti" viewBox="0 0 24 24"><circle cx="12" cy="12" r="10" fill="#86cc3c"/><path d="M6 11h12c0-7-11-7-12 0 0 7 9 8 12 3" fill="none" stroke="#fff" stroke-width="2"/></svg></span>
      <span class="tapp under cur-app"><svg class="ti" viewBox="0 0 16 16"><use href="#app"/></svg></span>
    </div>
    <div class="tray">
      <div class="cpu">55%<br>CPU使用</div>
      <svg class="tri t-up" viewBox="0 0 12 8"><path d="M1 7l5-5 5 5" fill="none" stroke="#fff"/></svg>
      <svg class="tri t-bat" viewBox="0 0 16 10"><path d="M1 1h12v8H1z" fill="none" stroke="#fff"/><path d="M3 3h5v4H3z" fill="#fff"/><path d="M14 3h1v4h-1z" fill="#fff"/></svg>
      <svg class="tri t-wifi" viewBox="0 0 16 14"><path d="M1 6c4-5 8-5 13-5M4 9c3-3 5-4 9-4M7 11c2-2 3-2 5-2" fill="none" stroke="#ddd"/><circle cx="9" cy="13" r="1" fill="#fff"/></svg>
      <svg class="tri t-vol" viewBox="0 0 16 14"><path d="M1 5h3l4-4v12L4 9H1z" fill="none" stroke="#fff"/><path d="M11 4c1 2 1 4 0 6M14 2c1.500 3 1.500 7 0 10" fill="none" stroke="#aaa"/></svg>
      <svg class="tri t-kb" viewBox="0 0 22 16"><rect x=".5" y=".5" width="21" height="15" fill="none" stroke="#fff"/><path d="M3 4h16M3 7h16M6 11h10" stroke="#fff" stroke-dasharray="1.500 1"/></svg>
      <span class="ime">中</span>
      <span class="sogou-tray">S</span>
      <div class="clock"><span>7:42</span><span>2017/10/4</span></div>
      <svg class="tri t-note" viewBox="0 0 16 16"><path d="M.5 .5h15v12H10l-2 3-2-3H.5z" fill="none" stroke="#fff"/></svg>
    </div>
  </div>

  <div class="ball"><span>71</span></div>
  <div class="sogou">
    <span class="s-logo">S</span>
    <span class="s-zh">中</span>
    <span class="s-p">°,</span>
    <svg class="s-i" viewBox="0 0 16 16"><rect x="5" y="1" width="6" height="10" rx="3" fill="#1c82d4"/><path d="M3 8c0 6 10 6 10 0M8 13v2" fill="none" stroke="#1c82d4" stroke-width="1.400"/></svg>
    <svg class="s-i" viewBox="0 0 16 16"><rect x="1" y="2" width="14" height="12" rx="1" fill="#1c82d4"/><path d="M3 5h10M3 8h10M5 11h6" stroke="#fff" stroke-dasharray="1.500 1"/></svg>
    <svg class="s-i" viewBox="0 0 16 16"><circle cx="6" cy="4" r="3" fill="#aebfce"/><path d="M1 14c0-6 9-6 9 0z" fill="#aebfce"/><rect x="9" y="9" width="6" height="5" fill="#fff" stroke="#aebfce"/></svg>
    <svg class="s-i" viewBox="0 0 16 16"><path d="M5 1L1 4l2 3 1-1v9h8V6l1 1 2-3-4-3-3 2z" fill="#1c82d4"/></svg>
    <svg class="s-i" viewBox="0 0 16 16"><path d="M15 4l-3 3-3-2 2-4c-3-1-6 2-5 5L1 12c-1 2 1 4 3 3l5-5c3 1 6-2 6-6z" fill="#1c82d4"/></svg>
  </div>
</div>
</body>
</html>
```
FILE: styles.css
```css
* { box-sizing: border-box; }
html, body { margin: 0; padding: 0; }
body {
  width: 1366px; height: 768px; overflow: hidden; background: #f0f0f0; color: #111;
  font: 12px/16px "Noto Sans CJK SC", "Noto Sans", sans-serif;
}
.sprite { position: absolute; }
.app { position: relative; width: 1366px; height: 768px; display: flex; flex-direction: column; overflow: hidden; }
.i { width: 16px; height: 16px; flex: none; display: block; }
i { font-style: normal; }
.m { font-family: "Liberation Mono", monospace; font-size: 11.500px; letter-spacing: -.9px; }

/* title */
.title { height: 23px; flex: none; background: #fff; display: flex; align-items: center; padding-left: 5px; gap: 3px; }
.title-text { font-size: 12.600px; white-space: nowrap; }
.winbtns { margin-left: auto; display: flex; gap: 34px; padding-right: 19px; align-items: center; }
.wb { width: 12px; height: 12px; display: block; }

/* menu */
.menu { height: 29px; flex: none; display: flex; align-items: center; padding-left: 7px; gap: 10.600px; white-space: nowrap; background: #f2f2f2; }
.helper { margin-left: 7px; }
.account { margin-left: auto; width: 236px; height: 27px; display: flex; align-items: center; gap: 5px; background: #f6f6f6; }
.beans { margin-left: 6px; }
.bell { margin-left: 12px; }
.more { font: bold 12px/10px "Liberation Sans", sans-serif; align-self: flex-start; margin-top: 3px; }
.account .more { margin-left: auto; margin-right: 5px; }

/* toolbars */
.row { display: flex; align-items: center; flex: none; }
.tg { display: flex; align-items: center; gap: 7px; height: 26px; background: linear-gradient(#fbfbfb, #f0f0f0); white-space: nowrap; }
.it { display: flex; align-items: center; gap: 4px; height: 22px; }
.off { color: #8a8a8a; }
.dk { color: #111; }
.dd { width: 0; height: 0; border: 3px solid transparent; border-top: 4px solid #222; border-bottom: 0; margin: 0 1px 0 2px; flex: none; }
.dd-tight { margin-left: -2px; }
.sep { width: 1px; height: 20px; background: #c4c4c4; margin: 0 -1px; flex: none; }
.sep-z { margin: 0; }
.grip { width: 3px; height: 20px; flex: none; background: repeating-linear-gradient(#b0b0b0 0 2px, transparent 2px 4px); }
.active { height: 24px; padding: 0 3px; background: #deeaf6; border: 1px solid #1a72c0; gap: 3px; }

.row1 { height: 31px; padding-left: 7px; align-items: flex-start; padding-top: 2px; }
.tg-file { width: 148px; gap: 6px; }
.tg-file > .it { gap: 0; }
.tg-file .dd { margin-left: 5px; }
.tg-file .more { margin-left: 7px; }
.tg-file .sep { margin: 0 3px 0 6px; }
.tg-main { padding-left: 1px; width: 501px; }
.tg-main .sigma { font: bold 14px/16px "Liberation Serif", serif; text-align: center; }
.more-mid { margin-left: 37px; margin-top: 6px; }
.tg-view { margin-left: 5px; padding-left: 2px; width: 623px; }
.view2d { background: #fff; }
.more-end { margin-left: 30px; margin-top: 6px; }

.main { flex: none; height: 625px; display: flex; }
.side { flex: none; width: 145px; display: flex; }
.nav { width: 139px; height: 622px; display: flex; flex-direction: column; }
.nav-head { height: 16px; background: #0078d7; color: #fff; display: flex; justify-content: space-between; align-items: center; font-size: 13px; flex: none; }
.nav-ctl { display: flex; gap: 8px; padding-right: 4px; }
.pin { width: 10px; height: 12px; display: block; }
.nav-btn { height: 22px; flex: none; border: 1px solid #b4b4b4; background: linear-gradient(#f8f8f8, #e9e9e9); text-align: center; line-height: 20px; font-size: 13px; }
.tree { flex: 1; background: #fff; border: 1px solid #a8a8a8; padding: 3px 0 0 2px; min-height: 0; margin: 1px 0; }
.tree-tools { height: 26px; display: flex; gap: 7px; padding-left: 4px; align-items: center; }
.tt { width: 16px; height: 14px; display: block; }
.node, .leaf { height: 16px; display: flex; align-items: center; white-space: nowrap; }
.node { padding-left: 8px; }
.node > .i { margin-right: 5px; }
.chev { width: 6px; height: 6px; border-right: 1.500px solid #777; border-top: 1.500px solid #777; transform: rotate(45deg); margin-right: 4px; flex: none; }
.chev.open { border-color: #333; transform: translate(1px, -2px) rotate(135deg); }
.dash { width: 4px; margin-right: 1px; border-top: 1px dotted #888; flex: none; }
.kids { margin-left: 12px; padding-left: 18px; border-left: 1px dotted #888; }
.leaf { position: relative; padding-left: 12px; border-left: 1px dotted #888; }
.leaf::before { content: ""; position: absolute; left: 0; top: 8px; width: 11px; border-top: 1px dotted #888; }
.leaf .i { margin-right: 4px; }
.leaf-sel { background: linear-gradient(90deg, transparent 9px, #d8d8d8 9px, #d8d8d8 78px, transparent 78px); }
.cad { margin-left: 4px; }
.new { font: bold 8px/8px "Liberation Sans", sans-serif; background: #ffe600; color: #000; align-self: flex-start; padding: 0 1px; margin: -1px 0 0 0; }

.work { flex: none; width: 1221px; display: flex; flex-direction: column; }
.row2 { height: 27px; padding-left: 3px; align-items: flex-start; }
.tg-edit { width: 787px; padding-left: 1px; }
.tg-edit > .grip { margin-right: -4px; }
.row3 { height: 28px; padding-left: 5px; }
.tg-combo { width: 561px; gap: 3px; padding-left: 3px; }
.combo { height: 22px; display: flex; align-items: center; justify-content: space-between; background: #fff; padding: 0 2px 0 2px; font-size: 12.500px; }
.combo .dd { margin: 0 2px 0 0; }
.c1 { width: 56px; }
.c2 { width: 70px; }
.tg-combo > .sep { margin: 0 3px; }
.tg-combo > .it { margin-left: 4px; }
.tg-combo > .active { margin-left: 0; }
.tg-combo > .ml2 { margin-left: 1px; }
.tg-combo > .ml6 { margin-left: 4px; }
.tg-axis { margin-left: 71px; width: 422px; padding-left: 3px; }
.row4 { height: 28px; padding-left: 3px; }
.tg-draw { width: 830px; padding-left: 4px; }
.sel { padding: 0 3px 0 2px; margin-right: -7px; }
.tg-empty { margin-left: 2px; gap: 2px; padding-left: 2px; }
.blank { width: 24px; height: 26px; background: #fafafa; }

.cad-view { width: 1221px; height: 309px; display: block; flex: none; background: #000; }
.g, .dr, .red, .red2, .bm2, .bm3, .bm5, .lilac, .amber, .ucs-g, .ucs-r, .thin-g, .thin-r { fill: none; }
.shapes { shape-rendering: crispEdges; }
.g { stroke: #008000; stroke-width: 1; }
.dr { stroke: #8b0000; stroke-width: 1; }
.red { stroke: #ff0000; stroke-width: 1; }
.red2 { stroke: #ff0000; stroke-width: 2; }
.bm2 { stroke: #00f000; stroke-width: 2; }
.bm3 { stroke: #00f000; stroke-width: 3; }
.bm5 { stroke: #00f000; stroke-width: 5; }
.lilac { stroke: #a060ff; }
.amber { stroke: #d09800; }
.ucs-g { stroke: #00ff00; stroke-width: 4; }
.ucs-r { stroke: #ff0000; stroke-width: 4; }
.tip-g { fill: #00ff00; shape-rendering: auto; }
.tip-r { fill: #ff0000; shape-rendering: auto; }
.thin-g { stroke: #00ff00; shape-rendering: auto; }
.thin-r { stroke: #ff0000; shape-rendering: auto; }
.pu { fill: #8000ff; }
.bubbles circle { fill: none; stroke: #008000; stroke-width: 1; }
.labels-c text { fill: #dcdcdc; font: 14px "Liberation Sans", sans-serif; text-anchor: middle; }
.labels-d text { fill: #c4c4c4; font: 15px "Liberation Sans", sans-serif; text-anchor: middle; }
.labels-d .pk { fill: #c090c0; }

.snapbar { height: 30px; padding-left: 3px; }
.tg-snap { width: 206px; gap: 4px; height: 28px; }
.tg-snap > .it:nth-child(2) { gap: 5px; }
.tg-snap > .active { gap: 3px; }
.tg-snap > .active + .active { margin-left: -4px; }
.tg-offs { margin-left: 248px; width: 410px; gap: 3px; padding-left: 3px; height: 28px; }
.c3 { width: 60px; padding-left: 0; padding-right: 0; }
.muted { color: #888; }
.spin { height: 24px; border: 1px solid #999; background: #f4f4f4; color: #888; display: flex; align-items: center; justify-content: flex-end; padding-right: 18px; font-size: 12px; position: relative; }
.muted + .spin { margin-left: 2px; }
.spin::after { content: "▴\A▾"; white-space: pre; position: absolute; right: 3px; top: 2px; font: 9px/9px "DejaVu Sans", sans-serif; color: #444; }
.s1 { width: 57px; }
.s2 { width: 69px; padding-right: 28px; }
.rot + .spin { margin-left: 0; }
.check { width: 11px; height: 11px; border: 1px solid #888; background: #fafafa; flex: none; }
.rot { margin-left: 5px; }

.editor { flex: 1; display: flex; min-height: 0; }
.grips { width: 10px; flex: none; background: radial-gradient(circle, #b8b8b8 1px, transparent 1.200px) 1px 4px / 4px 4px repeat-y; }
.edit-body { flex: 1; min-width: 0; }
.tg-rebar { height: 26px; margin: 1px 0 0; padding-left: 4px; background: linear-gradient(#fcfcfc, #f0f0f0); gap: 7px; }
.close { margin-left: 0; }
.total { margin-left: 3px; font-size: 12.500px; }

.sheet { position: relative; width: 1209px; height: 173px; border: 2px solid #c0c0c0; display: grid; grid-template-columns: 1fr 16px; grid-template-rows: 153px 16px; background: #f0f0f0; }
.sheet-clip { overflow: hidden; min-width: 0; }
.rebar { border-collapse: collapse; table-layout: fixed; width: 1189px; font-size: 12px; }
.w33 { width: 33px; } .w73 { width: 73px; } .w56 { width: 56px; } .w36 { width: 36px; } .w34 { width: 34px; } .w200 { width: 200px; }
.w166 { width: 166px; } .w157 { width: 157px; } .w61 { width: 61px; } .w163 { width: 163px; } .w38 { width: 38px; } .w50 { width: 50px; } .w60 { width: 60px; } .w62 { width: 62px; }
.rebar th, .rebar td { border: 1px solid #b8b8b8; padding: 0 2px; font-weight: normal; overflow: hidden; white-space: nowrap; }
.rebar thead th { height: 18px; line-height: 16px; background: linear-gradient(#ffffff, #ececec); text-align: center; font-size: 12.500px; }
.rebar thead th.cur { background: linear-gradient(#fbe3ae, #f3be62); color: #5a0f8c; }
.rebar tbody th { background: linear-gradient(#fdfdfd, #ececec); text-align: center; }
.rebar tbody th.mark { background: #fdd28c; color: #5a0f8c; }
.rebar td { background: #caffd2; }
.r41 { height: 41px; }
.r34 { height: 34px; }
.rebar td.bl { border-right: 1px solid #000; }
.rebar td.ctr { text-align: center; }
.rebar td.shape { padding: 0; }
.fig { display: block; width: 100%; height: 100%; }
.r41 .fig { height: 40px; }
.r34 .fig { height: 33px; }
.fig text { font: 11px "Liberation Sans", sans-serif; }
.fig .k { fill: #000; }
.fig .rd { fill: #f00; }
.rebar td.f { font: 11.500px/12px "Liberation Mono", monospace; letter-spacing: -.9px; }
.rebar td.d { line-height: 12px; white-space: nowrap; font-size: 12px; }
.rebar td.cell-edit { padding: 0; background: #e4fce8; }
.edit-in { height: 33px; display: flex; justify-content: space-between; padding: 1px 0 1px 2px; line-height: 14px; }
.caret { border-right: 1px solid #000; height: 14px; margin-top: 3px; padding-right: 1px; align-self: flex-start; }
.dots { width: 16px; background: #dcdcdc; border: 1px solid #aaa; text-align: center; font: bold 11px/26px "Liberation Sans", sans-serif; }
.vbar { position: relative; background: #f0f0f0; }
.thumb-v { position: absolute; left: 1px; right: 0; top: 61px; height: 33px; background: #c8c8c8; }
.hbar { position: relative; background: #f0f0f0; grid-column: 1 / 2; }
.thumb-h { position: absolute; left: 17px; width: 766px; top: 0; bottom: 0; background: #c8c8c8; }
.ar { position: absolute; width: 6px; height: 6px; border-top: 1.500px solid #555; border-left: 1.500px solid #555; }
.ar-up { left: 5px; top: 8px; transform: rotate(45deg); }
.ar-dn { left: 5px; bottom: 8px; transform: rotate(225deg); }
.ar-lt { left: 7px; top: 5px; transform: rotate(-45deg); }
.ar-rt { right: 5px; top: 5px; transform: rotate(135deg); }
.redbox { position: absolute; left: 802px; top: 87px; width: 37px; height: 45px; border: 3.500px solid #e60000; }

/* status */
.status { height: 20px; flex: none; display: flex; gap: 2px; }
.st { border: 1px solid #dcdcdc; background: linear-gradient(#fafafa, #f0f0f0); height: 19px; line-height: 17px; padding-left: 2px; white-space: nowrap; overflow: hidden; }
.s-a { width: 148px; } .s-b { width: 77px; } .s-c { width: 98px; } .s-d { width: 48px; } .s-e { width: 915px; } .s-f { flex: 1; }

/* taskbar */
.task { height: 40px; flex: none; display: flex; background: #0b1014; color: #fff; }
.start { width: 48px; background: #000; display: flex; align-items: center; justify-content: center; }
.winlogo { width: 16px; height: 16px; display: block; }
.search { width: 344px; background: #333; display: flex; align-items: center; color: #8c8c8c; font-size: 14px; padding-left: 10px; }
.cortana { width: 18px; height: 18px; border: 2.500px solid #d8d8d8; border-radius: 50%; margin-right: 8px; flex: none; }
.mic { width: 12px; height: 20px; margin-left: auto; margin-right: 15px; display: block; }
.apps { display: flex; }
.tapp { width: 48px; height: 40px; display: flex; align-items: center; justify-content: center; }
.under { box-shadow: inset 0 -2px 0 #76b9ed; }
.cur-app { background: #3a4046; }
.ti { width: 24px; height: 24px; display: block; }
.tray { flex: 1; display: flex; align-items: center; padding-left: 207px; position: relative; }
.cpu { width: 70px; text-align: center; line-height: 19px; font-size: 12px; flex: none; }
.tri { display: block; flex: none; }
.t-up { width: 12px; height: 8px; margin-left: 7px; }
.t-bat { width: 16px; height: 10px; margin-left: 9px; }
.t-wifi { width: 16px; height: 14px; margin-left: 9px; }
.t-vol { width: 16px; height: 14px; margin-left: 6px; }
.t-kb { width: 22px; height: 16px; margin-left: 8px; }
.ime { font-size: 13px; margin-left: 11px; font-weight: 700; }
.sogou-tray { width: 15px; height: 18px; margin-left: 14px; background: #f0501c; color: #fff; font: bold 13px/18px "Liberation Sans", sans-serif; text-align: center; border-radius: 3px; transform: rotate(-8deg); }
.clock { display: flex; flex-direction: column; align-items: center; width: 62px; margin-left: 15px; line-height: 19px; }
.t-note { width: 16px; height: 16px; margin-left: 17px; }

/* overlays */
.ball { position: absolute; left: 884px; top: -31px; width: 48px; height: 48px; border-radius: 50%; background: #47c45c; box-shadow: 0 0 0 2px #cfd8cf, 0 2px 4px rgba(0, 0, 0, .4); color: #fff; font: bold 11px/12px "Liberation Sans", sans-serif; display: flex; align-items: flex-end; justify-content: center; padding-bottom: 4px; }
.sogou { position: absolute; left: 821px; top: 38px; width: 185px; height: 24px; background: #f2f6fa; border: 1px solid #d0d8e0; display: flex; align-items: center; gap: 5px; padding-left: 32px; color: #1c82d4; }
.s-logo { position: absolute; left: -1px; top: -5px; width: 29px; height: 28px; background: #f0501c; color: #fff; border-radius: 4px; transform: rotate(-10deg); text-align: center; font: bold 24px/28px "Liberation Sans", sans-serif; }
.s-zh { font-size: 15px; font-weight: 700; }
.s-p { font-weight: 700; width: 12px; font-size: 14px; margin-left: 7px; }
.s-i { width: 16px; height: 16px; display: block; flex: none; }
```
